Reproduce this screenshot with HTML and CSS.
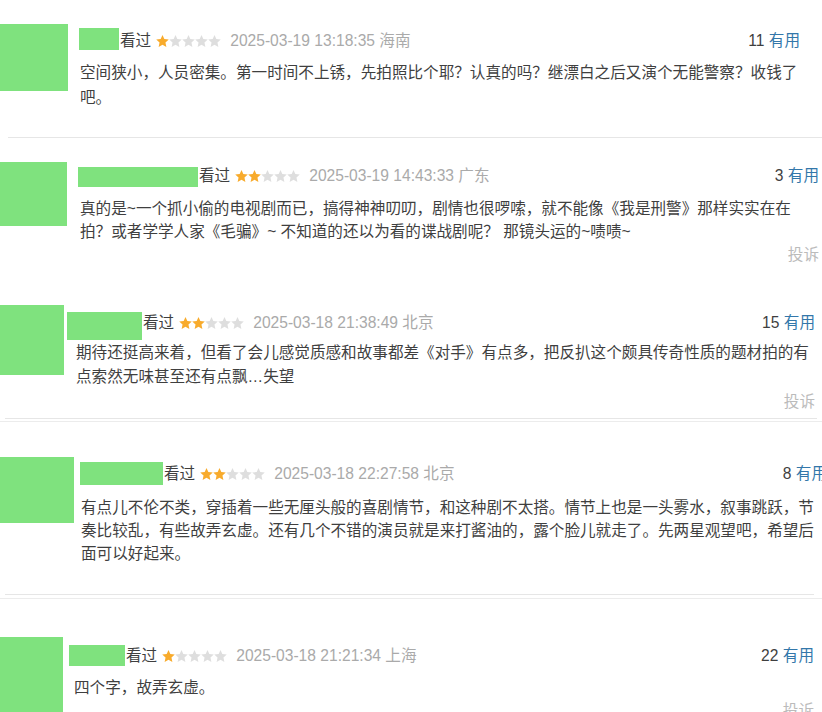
FILE: index.html
```html
<!DOCTYPE html>
<html lang="zh-CN">
<head>
<meta charset="utf-8">
<title>短评</title>
<link rel="stylesheet" href="styles.css">
</head>
<body>
<svg class="defs" width="0" height="0" aria-hidden="true">
  <defs>
    <symbol id="star" viewBox="0 0 13 12">
      <path d="M6.5 0 L8.32 4.09 L12.78 4.56 L9.45 7.56 L10.38 11.94 L6.5 9.7 L2.62 11.94 L3.55 7.56 L0.22 4.56 L4.68 4.09 Z"/>
    </symbol>
  </defs>
</svg>

<div class="list">

  <div class="comment c1">
    <div class="avatar"></div>
    <div class="body">
      <div class="head">
        <span class="name"></span>
        <span class="watched">看过</span>
        <svg class="stars" width="65" height="12" viewBox="0 0 65 12"><use href="#star" x="0" width="13" height="12" class="on"/><use href="#star" x="13" width="13" height="12" class="off"/><use href="#star" x="26" width="13" height="12" class="off"/><use href="#star" x="39" width="13" height="12" class="off"/><use href="#star" x="52" width="13" height="12" class="off"/></svg>
        <span class="time">2025-03-19 13:18:35 海南</span>
        <span class="votes"><span class="num">11</span> <span class="useful">有用</span></span>
      </div>
      <p class="text">空间狭小，人员密集。第一时间不上锈，先拍照比个耶？认真的吗？继漂白之后又演个无能警察？收钱了吧。</p>
    </div>
  </div>
  <div class="sep sep1"></div>

  <div class="comment c2">
    <div class="avatar"></div>
    <div class="body">
      <div class="head">
        <span class="name"></span>
        <span class="watched">看过</span>
        <svg class="stars" width="65" height="12" viewBox="0 0 65 12"><use href="#star" x="0" width="13" height="12" class="on"/><use href="#star" x="13" width="13" height="12" class="on"/><use href="#star" x="26" width="13" height="12" class="off"/><use href="#star" x="39" width="13" height="12" class="off"/><use href="#star" x="52" width="13" height="12" class="off"/></svg>
        <span class="time">2025-03-19 14:43:33 广东</span>
        <span class="votes"><span class="num">3</span> <span class="useful">有用</span></span>
      </div>
      <p class="text">真的是~一个抓小偷的电视剧而已，搞得神神叨叨，剧情也很啰嗦，就不能像《我是刑警》那样实实在在拍？或者学学人家《毛骗》~ 不知道的还以为看的谍战剧呢？ 那镜头运的~啧啧~</p>
      <div class="report">投诉</div>
    </div>
  </div>

  <div class="comment c3">
    <div class="avatar"></div>
    <div class="body">
      <div class="head">
        <span class="name"></span>
        <span class="watched">看过</span>
        <svg class="stars" width="65" height="12" viewBox="0 0 65 12"><use href="#star" x="0" width="13" height="12" class="on"/><use href="#star" x="13" width="13" height="12" class="on"/><use href="#star" x="26" width="13" height="12" class="off"/><use href="#star" x="39" width="13" height="12" class="off"/><use href="#star" x="52" width="13" height="12" class="off"/></svg>
        <span class="time">2025-03-18 21:38:49 北京</span>
        <span class="votes"><span class="num">15</span> <span class="useful">有用</span></span>
      </div>
      <p class="text">期待还挺高来着，但看了会儿感觉质感和故事都差《对手》有点多，把反扒这个颇具传奇性质的题材拍的有点索然无味甚至还有点飘…失望</p>
      <div class="report">投诉</div>
    </div>
  </div>
  <div class="sep sep3"></div>
  <div class="seam seam3"></div>

  <div class="comment c4">
    <div class="avatar"></div>
    <div class="body">
      <div class="head">
        <span class="name"></span>
        <span class="watched">看过</span>
        <svg class="stars" width="65" height="12" viewBox="0 0 65 12"><use href="#star" x="0" width="13" height="12" class="on"/><use href="#star" x="13" width="13" height="12" class="on"/><use href="#star" x="26" width="13" height="12" class="off"/><use href="#star" x="39" width="13" height="12" class="off"/><use href="#star" x="52" width="13" height="12" class="off"/></svg>
        <span class="time">2025-03-18 22:27:58 北京</span>
        <span class="votes"><span class="num">8</span> <span class="useful">有用</span></span>
      </div>
      <p class="text">有点儿不伦不类，穿插着一些无厘头般的喜剧情节，和这种剧不太搭。情节上也是一头雾水，叙事跳跃，节奏比较乱，有些故弄玄虚。还有几个不错的演员就是来打酱油的，露个脸儿就走了。先两星观望吧，希望后面可以好起来。</p>
    </div>
  </div>
  <div class="sep sep4"></div>
  <div class="seam seam4"></div>

  <div class="comment c5">
    <div class="avatar"></div>
    <div class="body">
      <div class="head">
        <span class="name"></span>
        <span class="watched">看过</span>
        <svg class="stars" width="65" height="12" viewBox="0 0 65 12"><use href="#star" x="0" width="13" height="12" class="on"/><use href="#star" x="13" width="13" height="12" class="off"/><use href="#star" x="26" width="13" height="12" class="off"/><use href="#star" x="39" width="13" height="12" class="off"/><use href="#star" x="52" width="13" height="12" class="off"/></svg>
        <span class="time">2025-03-18 21:21:34 上海</span>
        <span class="votes"><span class="num">22</span> <span class="useful">有用</span></span>
      </div>
      <p class="text">四个字，故弄玄虚。</p>
      <div class="report">投诉</div>
    </div>
  </div>

</div>
</body>
</html>
```

FILE: styles.css
```css
html, body {
  margin: 0;
  padding: 0;
  background: #fff;
  width: 822px;
  height: 712px;
  overflow: hidden;
}

body {
  font-family: "Liberation Sans", "Noto Sans CJK SC", sans-serif;
  font-size: 15.6px;
  color: #3f3f3f;
}

.defs {
  position: absolute;
  width: 0;
  height: 0;
}

.list {
  display: flex;
  flex-direction: column;
  width: 822px;
}

.comment {
  display: flex;
  align-items: flex-start;
}

.avatar {
  flex: none;
  background: #7fe27e;
  width: var(--aw);
  height: var(--ah);
  margin-top: var(--at);
}

.body {
  flex: none;
  width: var(--bw);
  padding-top: var(--bt);
  padding-bottom: var(--bb);
}

.head {
  display: flex;
  align-items: flex-start;
  height: 24px;
  line-height: 24px;
  white-space: nowrap;
}

.name {
  flex: none;
  display: block;
  background: #7fe27e;
  width: var(--nw);
  height: var(--nh);
  margin-top: var(--nt);
  margin-left: var(--nl);
  margin-right: 1px;
}

.watched {
  color: #3f3f3f;
}

.stars {
  flex: none;
  margin: 6px 9px 0 5px;
}

.stars .on {
  fill: #f8ab2c;
}

.stars .off {
  fill: #dedede;
}

.time {
  color: #aaa;
}

.votes {
  margin-left: auto;
}

.num {
  color: #3f3f3f;
}

.useful {
  color: #37a;
}

.text {
  margin: var(--tt) 0 0 var(--tl);
  width: var(--tw);
  line-height: var(--lh);
}

.report {
  text-align: right;
  color: #bbb;
  line-height: 24px;
  margin-top: var(--rt);
}

.sep {
  height: 0;
  border-top: 1px solid #e6e6e6;
}

.seam {
  height: 0;
  border-top: 1px solid #ececec;
}

.sep1 { margin-left: 8px; }
.sep3 { margin-left: 5px; width: 812px; }
.seam3 { margin-top: 2px; }
.sep4 { margin-left: 5px; width: 809px; }
.seam4 { margin-top: 3px; }

.c1 {
  --aw: 68px; --ah: 67px; --at: 24px;
  --bw: 732px; --bt: 29px; --bb: 27px;
  --nw: 40px; --nh: 22px; --nt: -1px; --nl: 11px;
  --tt: 7px; --tl: 12px; --tw: 720px; --lh: 25px;
}

.c2 {
  --aw: 67px; --ah: 64px; --at: 24px;
  --bw: 752px; --bt: 26px; --bb: 23px;
  --nw: 120px; --nh: 20px; --nt: 3px; --nl: 11px;
  --tt: 9px; --tl: 13px; --tw: 720px; --lh: 23px;
  --rt: 0px;
}

.c3 {
  --aw: 64px; --ah: 70px; --at: 15px;
  --bw: 751px; --bt: 21px; --bb: 4px;
  --nw: 75px; --nh: 28px; --nt: 1px; --nl: 3px;
  --tt: 6px; --tl: 12px; --tw: 739px; --lh: 24px;
  --rt: 1px;
}

.c4 {
  --aw: 74px; --ah: 66px; --at: 35px;
  --bw: 753px; --bt: 40px; --bb: 29px;
  --nw: 83px; --nh: 23px; --nt: 0px; --nl: 6px;
  --tt: 10px; --tl: 7px; --tw: 746px; --lh: 23px;
}

.c5 {
  --aw: 63px; --ah: 80px; --at: 38px;
  --bw: 751px; --bt: 45px; --bb: 0px;
  --nw: 56px; --nh: 21px; --nt: 1px; --nl: 6px;
  --tt: 8px; --tl: 11px; --tw: 739px; --lh: 24px;
  --rt: -1px;
}
```
